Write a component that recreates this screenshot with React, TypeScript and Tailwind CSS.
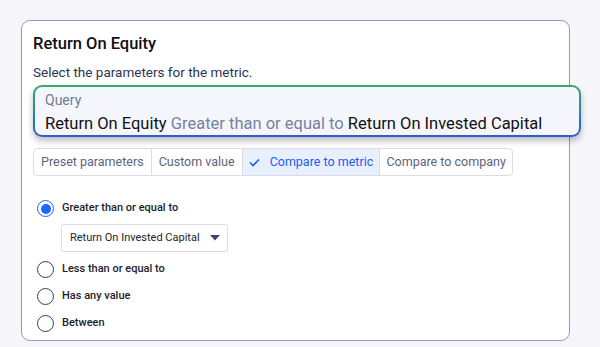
import React from "react";

const tabs = [
  { label: "Preset parameters", w: "w-[117px]" },
  { label: "Custom value", w: "w-[91px]" },
  { label: "Compare to metric", w: "w-[138px]", active: true },
  { label: "Compare to company", w: "w-[133px]" },
];

function Radio({ checked, label }: { checked?: boolean; label: string }) {
  return (
    <div className="flex items-center h-[17px]">
      <span
        className={
          "w-[17px] h-[17px] rounded-full flex items-center justify-center shrink-0 " +
          (checked ? "border-[1.5px] border-[#1a66ff]" : "border-[1.5px] border-[#3a3f55]")
        }
      >
        {checked && <span className="w-[10px] h-[10px] rounded-full bg-[#1a66ff]" />}
      </span>
      <span className="ml-[8px] text-[11px] font-medium text-[#1c1e2b] whitespace-nowrap">{label}</span>
    </div>
  );
}

export default function App() {
  return (
    <div className="w-[600px] h-[347px] bg-[#f5f5fa] pt-[20px] pl-[21px] overflow-hidden" style={{ fontFamily: "Roboto, 'Noto Sans', sans-serif" }}>
      <div className="w-[549px] h-[321px] bg-white border border-[#8f97cc] rounded-[9px] pl-[11px] pt-[13px]">
        <div className="text-[16.5px] font-medium text-[#111] leading-[20px]">Return On Equity</div>
        <div className="mt-[9px] text-[13.5px] text-[#2b3452] leading-[18px]">Select the parameters for the metric.</div>
        <div className="mt-[4px] w-[548px] h-[52px] rounded-[9px] p-[2px] bg-gradient-to-b from-[#3aaa6a] to-[#2f5bd0] shadow-[0_4px_6px_rgba(0,0,0,0.25)]">
          <div className="w-full h-full rounded-[7px] bg-[#f5f6fb] pl-[10px] pt-[4px]">
            <div className="text-[14px] text-[#6e7b9a] leading-[18px]">Query</div>
            <div className="mt-[5px] text-[16.5px] leading-[20px] text-[#111] whitespace-nowrap">
              Return On Equity <span className="text-[#76829f]">Greater than or equal to</span> Return On Invested Capital
            </div>
          </div>
        </div>
        <div className="mt-[11px] flex h-[28px] w-[480px] border border-[#dadde8] rounded-[4px] overflow-hidden">
          {tabs.map((t, i) => (
            <div
              key={t.label}
              className={
                t.w +
                " h-full flex items-center justify-center text-[12.5px] whitespace-nowrap " +
                (i > 0 ? "border-l border-[#dadde8] " : "") +
                (t.active ? "bg-[#e9f0fd] text-[#1a5cf5]" : "text-[#5a6480]")
              }
            >
              {t.active && (
                <svg width="11" height="9" viewBox="0 0 11 9" className="mr-[10px]">
                  <path d="M1 4.5 L4 7.5 L10 1.5" fill="none" stroke="#1a5cf5" strokeWidth="1.6" />
                </svg>
              )}
              {t.label}
            </div>
          ))}
        </div>
        <div className="mt-[24px] pl-[4px]">
          <Radio checked label="Greater than or equal to" />
          <div className="ml-[24px] mt-[7px] w-[167px] h-[28px] border border-[#dcdfe8] rounded-[2px] flex items-center justify-between pl-[8px] pr-[7px]">
            <span className="text-[11px] text-[#1c1e2b] whitespace-nowrap">Return On Invested Capital</span>
            <svg width="10" height="6" viewBox="0 0 10 6">
              <path d="M0 0 L10 0 L5 5.5 Z" fill="#3d4563" />
            </svg>
          </div>
          <div className="mt-[9px] flex flex-col gap-[10px]">
            <Radio label="Less than or equal to" />
            <Radio label="Has any value" />
            <Radio label="Between" />
          </div>
        </div>
      </div>
    </div>
  );
}
